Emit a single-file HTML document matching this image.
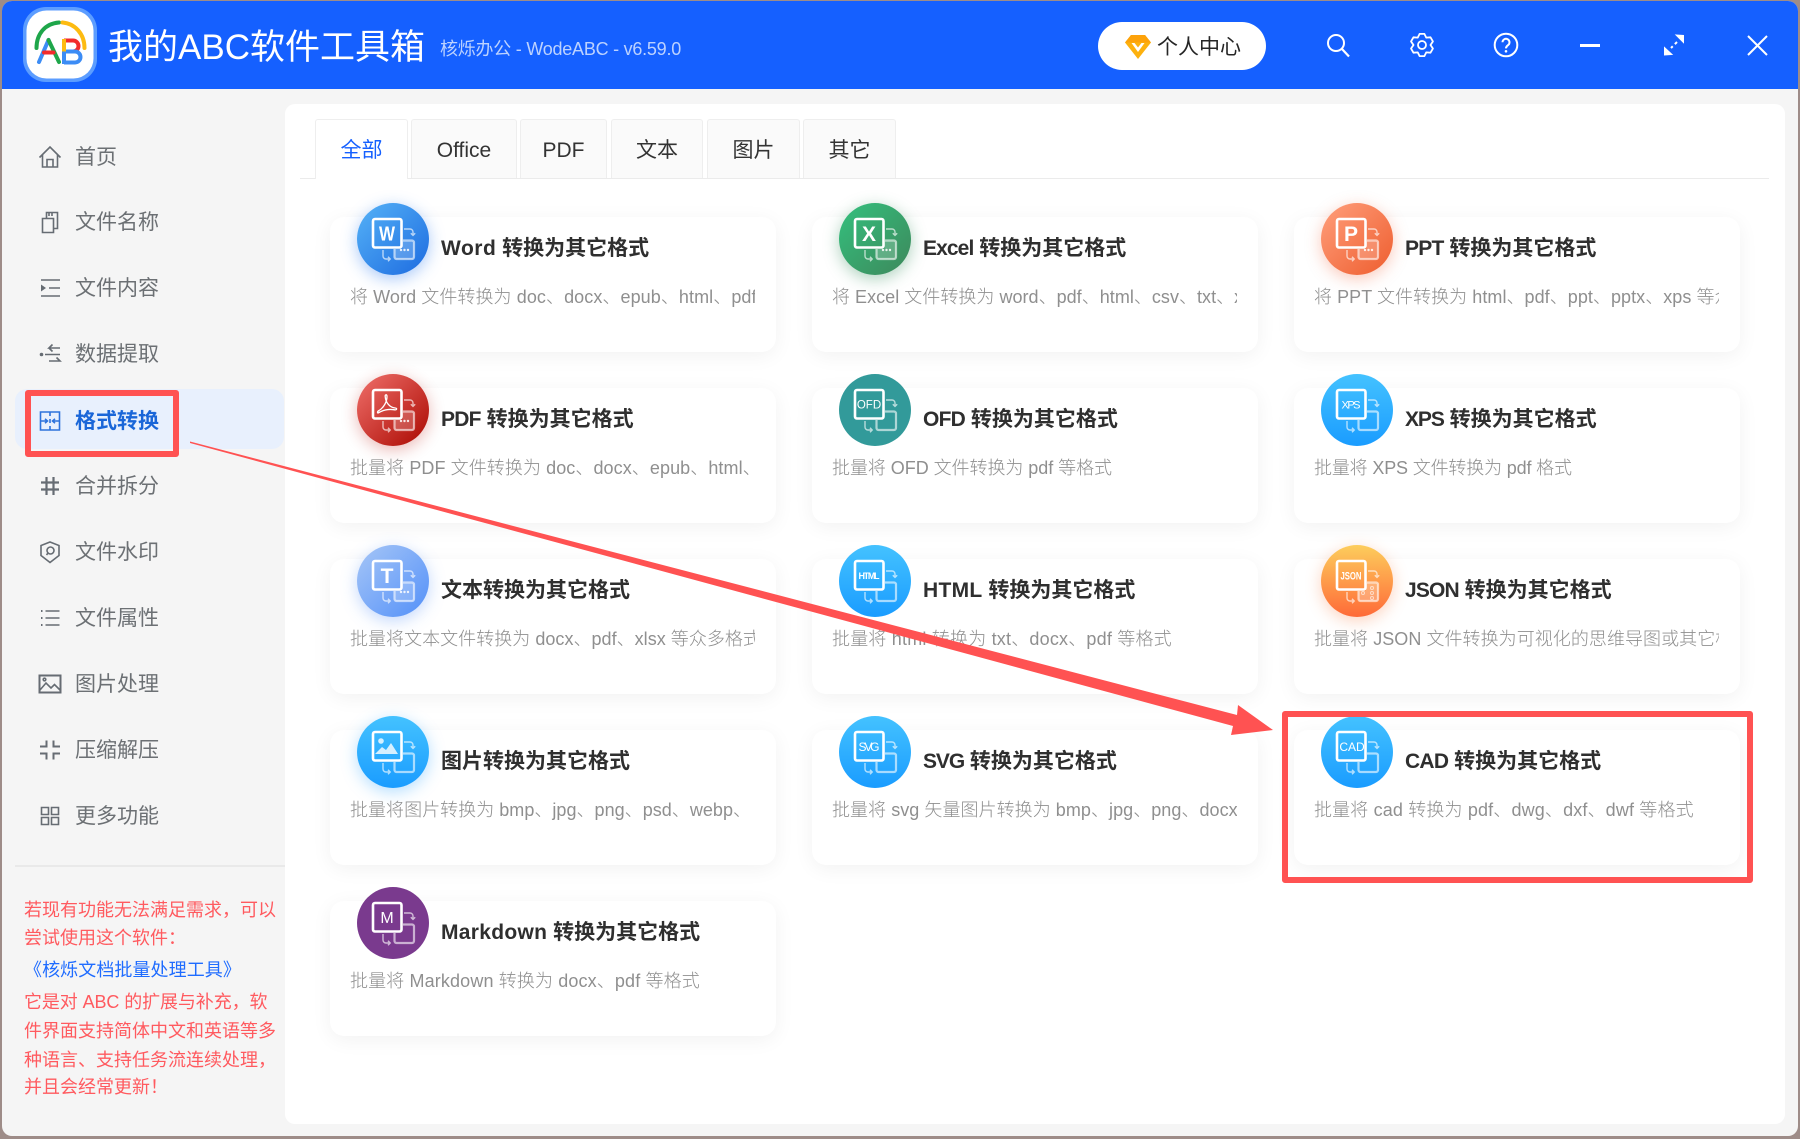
<!DOCTYPE html>
<html lang="zh-CN">
<head>
<meta charset="utf-8">
<title>我的ABC软件工具箱</title>
<style>
*{box-sizing:border-box;margin:0;padding:0}
html,body{width:1800px;height:1139px;overflow:hidden;background:#9e8c88;font-family:"Liberation Sans","Noto Sans CJK SC",sans-serif}
.win{position:absolute;left:2px;top:1px;width:1796px;height:1135px;background:#f5f5f5;border-radius:10px;overflow:hidden}
.head{position:absolute;left:2px;top:1px;width:1796px;height:88px;background:#1560ff;border-radius:10px 10px 0 0}
.abs{position:absolute}
.logo{position:absolute;left:23px;top:7px;width:74px;height:75px}
.ttl{position:absolute;left:108px;top:26px;height:44px;line-height:44px;font-size:35px;color:#fff;white-space:nowrap}
.ver{position:absolute;left:440px;top:36px;height:26px;line-height:26px;font-size:18px;letter-spacing:-.24px;color:#bcd2ff;white-space:nowrap}
.pill{position:absolute;left:1098px;top:22px;width:168px;height:48px;border-radius:24px;background:#fff}
.pilltx{position:absolute;left:1157px;top:32px;height:32px;line-height:32px;font-size:21px;color:#262626;white-space:nowrap}
.panel{position:absolute;left:285px;top:104px;width:1500px;height:1020px;background:#fff;border-radius:10px}
.tabline{position:absolute;left:300px;top:178px;width:1469px;height:1px;background:#ebebeb}
.tab{position:absolute;top:119px;height:59px;line-height:62px;text-align:center;font-size:21px;color:#333;background:#fafafa;border:1px solid #eeeeee;border-bottom:none;border-radius:3px 3px 0 0}
.tab.on{background:#fff;color:#1560ff;height:60px}
.nav{position:absolute;left:75px;height:30px;line-height:30px;font-size:21px;color:#6c7074;white-space:nowrap}
.nav.on{color:#1a66d8;font-weight:700}
.ni{position:absolute;left:38px;width:24px;height:24px;fill:none;stroke:#666c73;stroke-width:1.6}
.act{position:absolute;left:15px;top:389px;width:269px;height:60px;background:#e8f0fd;border-radius:12px}
.divd{position:absolute;left:15px;top:865px;width:270px;height:2px;background:#e9e9e9}
.note{position:absolute;left:24px;height:28px;line-height:28px;font-size:18px;color:#ff5a5f;white-space:nowrap}
.card{position:absolute;width:446px;height:135px;background:#fff;border-radius:14px;box-shadow:0 4px 20px rgba(0,0,0,.055)}
.t{position:absolute;left:111px;top:17px;height:30px;line-height:30px;font-size:21px;font-weight:700;color:#2f2f2f;white-space:nowrap}
.d{position:absolute;left:20px;top:65px;width:405px;height:30px;line-height:30px;font-size:18px;font-weight:300;letter-spacing:.08px;color:#8f8f8f;white-space:nowrap;overflow:hidden}
.ic{position:absolute;left:27px;top:-14px;width:72px;height:72px;border-radius:50%}
.ic svg{position:absolute;left:0;top:0;width:72px;height:72px}
.lb{font-family:"Liberation Sans",sans-serif;fill:#fff;text-anchor:middle}
.box{position:absolute;border:6px solid #ff5252;border-radius:3px}
</style>
</head>
<body>
<svg width="0" height="0" style="position:absolute">
  <defs>
    <g id="b">
      <path d="M46 37.5H55a2 2 0 0 1 2 2V54a2 2 0 0 1-2 2H39.5a2 2 0 0 1-2-2V46" fill="none" stroke="#fff" stroke-opacity=".6" stroke-width="2.2"/>
      <path d="M47 26h6a3 3 0 0 1 3 3v3M53.8 30.2l2.2 2.2 2.2-2.2M26 47v6a3 3 0 0 0 3 3h4M31 53.8l2.2 2.2-2.2 2.2" fill="none" stroke="#fff" stroke-opacity=".65" stroke-width="1.4"/>
      <rect x="16" y="16" width="28.5" height="28.5" rx="2" fill="none" stroke="#fff" stroke-width="2.6"/>
    </g>
    <g id="o">
      <path d="M45.5 38H55a2 2 0 0 1 2 2V54a2 2 0 0 1-2 2H39.5a2 2 0 0 1-2-2V46H45.500z" fill="#fff" fill-opacity=".2"/>
      <circle cx="44" cy="47" r="1.2" fill="#fff" fill-opacity=".85"/><circle cx="47.500" cy="47" r="1.2" fill="#fff" fill-opacity=".85"/><circle cx="51" cy="47" r="1.2" fill="#fff" fill-opacity=".85"/>
    </g>
  </defs>
</svg>

<div class="win"></div>
<div class="head"></div>

<!-- logo -->
<svg class="logo" viewBox="0 0 74 75">
  <rect x="0" y="0" width="74" height="75" rx="23" fill="#5c9dff"/>
  <rect x="3.500" y="3.500" width="67" height="68" rx="20" fill="#fff"/>
  <path d="M13.500 41C13.500 27 22 16.500 36 15.500" fill="none" stroke="#1ea64a" stroke-width="4" stroke-linecap="round"/>
  <path d="M39.500 15.500C52 16.500 61.500 27 61.500 41" fill="none" stroke="#fdbb11" stroke-width="4" stroke-linecap="round"/>
  <path d="M16 55L25.500 33" fill="none" stroke="#3c8cf5" stroke-width="4" stroke-linecap="round"/>
  <path d="M25.500 33L36 55" fill="none" stroke="#1ea64a" stroke-width="4" stroke-linecap="round"/>
  <path d="M21 45.500H30.500" fill="none" stroke="#f22b2b" stroke-width="4" stroke-linecap="round"/>
  <path d="M41 33.500H50a5.500 5.500 0 0 1 0 11H41" fill="none" stroke="#f22b2b" stroke-width="4"/>
  <path d="M41 44.500H52a5.500 5.500 0 0 1 0 11H41" fill="none" stroke="#3c8cf5" stroke-width="4"/>
  <path d="M41 32V44.500" fill="none" stroke="#fdbb11" stroke-width="4"/>
  <path d="M41 44.500V57" fill="none" stroke="#3c8cf5" stroke-width="4"/>
</svg>
<div class="ttl">我的ABC软件工具箱</div>
<div class="ver">核烁办公 - WodeABC - v6.59.0</div>

<div class="pill"></div>
<svg class="abs" style="left:1124px;top:34px" width="28" height="26" viewBox="0 0 28 26">
  <path d="M7 1H21L27 8.500L14 25L1 8.500Z" fill="#fdb10e"/>
  <path d="M7.500 9H20.500L14 18Z" fill="#fff"/>
  <path d="M10.500 9H17.500L14 13.500Z" fill="#fdb10e"/>
  <path d="M7 1H21L27 8.500H1Z" fill="#fda20a"/>
</svg>
<div class="pilltx">个人中心</div>

<!-- header tools -->
<svg class="abs" style="left:1325px;top:32px" width="26" height="26" viewBox="0 0 26 26" fill="none" stroke="#fff" stroke-width="2">
  <circle cx="11" cy="11" r="8"/><path d="M17 17L24 24.500" stroke-width="2.200"/>
</svg>
<svg class="abs" style="left:1410px;top:33px" width="24" height="24" viewBox="0 0 24 24" fill="none" stroke="#fff" stroke-width="1.800" stroke-linejoin="round">
  <path d="M9.600.9L14.400.9L16.250 4.640L20.500 4.300L22.900 8.450L20.500 12L22.900 15.550L20.500 19.700L16.250 19.360L14.400 23.100L9.600 23.100L7.750 19.360L3.450 19.700L1.060 15.550L3.500 12L1.060 8.450L3.450 4.300L7.750 4.640Z"/>
  <circle cx="12" cy="12" r="4"/>
</svg>
<svg class="abs" style="left:1493px;top:32px" width="26" height="26" viewBox="0 0 26 26" fill="none" stroke="#fff" stroke-width="2">
  <circle cx="13" cy="13" r="11.300"/>
  <path d="M9.500 10.300a3.500 3.500 0 1 1 5.500 2.900c-1.300.9-2 1.600-2 3.200"/>
  <circle cx="13" cy="19.300" r=".8" fill="#fff" stroke-width="1"/>
</svg>
<div class="abs" style="left:1580px;top:44px;width:20px;height:2.500px;background:#fff"></div>
<svg class="abs" style="left:1662px;top:33px" width="24" height="24" viewBox="0 0 24 24" fill="#fff" stroke="#fff">
  <path d="M15 9L9 15" stroke-width="2" stroke-dasharray="3 3"/>
  <path d="M14 2L21.500 2.500L21.500 9.500Z" stroke-width="1"/>
  <path d="M2.500 14.500L2.500 22L10 21.500Z" stroke-width="1"/>
</svg>
<svg class="abs" style="left:1747px;top:35px" width="21" height="21" viewBox="0 0 21 21" fill="none" stroke="#fff" stroke-width="2">
  <path d="M1 1L20 20M20 1L1 20"/>
</svg>

<!-- sidebar -->
<div class="act"></div>

<svg class="ni" style="top:145px" viewBox="0 0 24 24"><path d="M1.500 12.500L12 2L22.500 12.500M4.500 10V22H19.500V10M9 22V14.500H15V22"/></svg>
<div class="nav" style="top:143px">首页</div>
<svg class="ni" style="top:210px" viewBox="0 0 24 24"><path d="M4.500 8.500H15.500V22.500H4.500ZM8.500 8V2.500H19.500V18.500H16M11 2.500V6M14 2.500V6"/></svg>
<div class="nav" style="top:208px">文件名称</div>
<svg class="ni" style="top:276px" viewBox="0 0 24 24"><path d="M3 4H22M11 12H22M3 20H22"/><path d="M3 8.500L8 12L3 15.500Z" fill="#666c73" stroke="none"/></svg>
<div class="nav" style="top:274px">文件内容</div>
<svg class="ni" style="top:342px" viewBox="0 0 24 24"><circle cx="3.500" cy="12.500" r="1.800" fill="#666c73" stroke="none"/><path d="M7 12.500H22M22 6H11L14.500 2.500M11 19H22L18.500 15.500M11 6L14.500 9.500"/></svg>
<div class="nav" style="top:340px">数据提取</div>
<svg class="ni" style="top:409px;stroke:#2d72dc" viewBox="0 0 24 24"><path d="M2.500 3H21.500V21H2.500ZM12 3V7M12 10V14M12 17V21M3 12H9M7 9.800L9.500 12L7 14.200M21 12H15M17 9.800L14.500 12L17 14.200"/></svg>
<div class="nav on" style="top:407px">格式转换</div>
<svg class="ni" style="top:474px" viewBox="0 0 24 24"><path d="M3 8.500H21M3 15.500H21M8.500 3V21M15.500 3V21" stroke-width="2.200"/></svg>
<div class="nav" style="top:472px">合并拆分</div>
<svg class="ni" style="top:540px" viewBox="0 0 24 24"><path d="M12 2L21 5.500V15.500L12 22.500L3 15.500V5.500Z"/><circle cx="12.500" cy="10.500" r="3.500"/><path d="M10 13L8.500 15"/></svg>
<div class="nav" style="top:538px">文件水印</div>
<svg class="ni" style="top:606px" viewBox="0 0 24 24"><path d="M7.500 5H21.500M7.500 12H21.500M7.500 19H21.500"/><path d="M3 5h1.500M3 12h1.500M3 19h1.500" stroke-width="2"/></svg>
<div class="nav" style="top:604px">文件属性</div>
<svg class="ni" style="top:672px" viewBox="0 0 24 24"><path d="M1.500 3.500H22.500V20.500H1.500Z" stroke-width="2"/><path d="M2 18L8 11L13 16L16.500 12.500L22 18"/><circle cx="6.500" cy="7.500" r="1.300"/></svg>
<div class="nav" style="top:670px">图片处理</div>
<svg class="ni" style="top:738px" viewBox="0 0 24 24"><path d="M2 8.500H8.500V2.500M15.500 2.500V8.500H22M2 15.500H8.500V21.500M22 15.500H15.500V21.500" stroke-width="2"/></svg>
<div class="nav" style="top:736px">压缩解压</div>
<svg class="ni" style="top:804px" viewBox="0 0 24 24"><path d="M3.500 3.500H10.500V10.500H3.500ZM13.500 3.500H20.500V10.500H13.500ZM3.500 13.500H10.500V20.500H3.500ZM13.500 13.500H20.500V20.500H13.500Z"/></svg>
<div class="nav" style="top:802px">更多功能</div>

<div class="divd"></div>
<div class="note" style="top:896px">若现有功能无法满足需求，可以</div>
<div class="note" style="top:924px">尝试使用这个软件：</div>
<div class="note" style="top:956px;left:24px;color:#1f6cff;letter-spacing:.08px">《核烁文档批量处理工具》</div>
<div class="note" style="top:988px;letter-spacing:-.1px">它是对 ABC 的扩展与补充，软</div>
<div class="note" style="top:1017px">件界面支持简体中文和英语等多</div>
<div class="note" style="top:1046px">种语言、支持任务流连续处理，</div>
<div class="note" style="top:1073px">并且会经常更新！</div>

<!-- main panel -->
<div class="panel"></div>
<div class="tabline"></div>
<div class="tab on" style="left:315px;width:93px">全部</div>
<div class="tab" style="left:411px;width:106px">Office</div>
<div class="tab" style="left:520px;width:87px">PDF</div>
<div class="tab" style="left:611px;width:92px">文本</div>
<div class="tab" style="left:707px;width:93px">图片</div>
<div class="tab" style="left:803px;width:93px">其它</div>

<!-- row 1 -->
<div class="card" style="left:330px;top:217px">
  <div class="ic" style="background:linear-gradient(135deg,#55b2f7,#1d6be0);box-shadow:0 4px 16px rgba(40,120,240,.4)"><svg viewBox="0 0 72 72"><use href="#o"/><use href="#b"/><text class="lb" x="30" y="37.500" font-size="20" font-weight="700" textLength="16" lengthAdjust="spacingAndGlyphs">W</text></svg></div>
  <div class="t"><span style="letter-spacing:.5px">Word</span> 转换为其它格式</div>
  <div class="d">将 Word 文件转换为 doc、docx、epub、html、pdf、ppt、pptx 等</div>
</div>
<div class="card" style="left:812px;top:217px">
  <div class="ic" style="background:linear-gradient(135deg,#34c07e,#3d885b);box-shadow:0 4px 16px rgba(50,140,90,.4)"><svg viewBox="0 0 72 72"><use href="#o"/><use href="#b"/><text class="lb" x="30" y="38" font-size="21" font-weight="700">X</text></svg></div>
  <div class="t"><span style="letter-spacing:-.9px">Excel</span> 转换为其它格式</div>
  <div class="d" style="letter-spacing:.03px">将 Excel 文件转换为 word、pdf、html、csv、txt、xml 等格式</div>
</div>
<div class="card" style="left:1294px;top:217px">
  <div class="ic" style="background:linear-gradient(135deg,#ff9f7c,#ee5d2e);box-shadow:0 4px 16px rgba(240,100,60,.35)"><svg viewBox="0 0 72 72"><use href="#o"/><use href="#b"/><text class="lb" x="30" y="38" font-size="21" font-weight="700">P</text></svg></div>
  <div class="t"><span style="letter-spacing:-.75px">PPT</span> 转换为其它格式</div>
  <div class="d" style="letter-spacing:.05px">将 PPT 文件转换为 html、pdf、ppt、pptx、xps 等众多格式</div>
</div>

<!-- row 2 -->
<div class="card" style="left:330px;top:388px">
  <div class="ic" style="background:linear-gradient(135deg,#f0706b,#aa0800);box-shadow:0 4px 16px rgba(190,40,30,.33)"><svg viewBox="0 0 72 72"><use href="#o"/><use href="#b"/><path d="M22 38.500c-2 1.500-2-1 0-2 5-3 8-9 8-14 0-2.500-2-2-1.800 0 .4 6 4.500 11 10 11.500 2.200.2 1.800 2.200-.5 1.800-6-1-11 0-15.700 2.700z" fill="none" stroke="#fff" stroke-width="1.300"/></svg></div>
  <div class="t"><span style="letter-spacing:-.75px">PDF</span> 转换为其它格式</div>
  <div class="d">批量将 PDF 文件转换为 doc、docx、epub、html、</div>
</div>
<div class="card" style="left:812px;top:388px">
  <div class="ic" style="background:#329a9a"><svg viewBox="0 0 72 72"><use href="#b"/><text class="lb" x="30" y="34.500" font-size="11.500">OFD</text></svg></div>
  <div class="t"><span style="letter-spacing:-.75px">OFD</span> 转换为其它格式</div>
  <div class="d" style="letter-spacing:-.05px">批量将 OFD 文件转换为 pdf 等格式</div>
</div>
<div class="card" style="left:1294px;top:388px">
  <div class="ic" style="background:linear-gradient(180deg,#44c2ff,#1a9cff)"><svg viewBox="0 0 72 72"><use href="#b"/><text class="lb" x="30" y="34.500" font-size="11" textLength="19">XPS</text></svg></div>
  <div class="t"><span style="letter-spacing:-1.1px">XPS</span> 转换为其它格式</div>
  <div class="d" style="letter-spacing:-.16px">批量将 XPS 文件转换为 pdf 格式</div>
</div>

<!-- row 3 -->
<div class="card" style="left:330px;top:559px">
  <div class="ic" style="background:linear-gradient(135deg,#a6c6f7,#5390f8);box-shadow:0 4px 16px rgba(80,140,245,.35)"><svg viewBox="0 0 72 72"><use href="#o"/><use href="#b"/><text class="lb" x="30" y="38" font-size="21" font-weight="700">T</text></svg></div>
  <div class="t">文本转换为其它格式</div>
  <div class="d" style="letter-spacing:.03px">批量将文本文件转换为 docx、pdf、xlsx 等众多格式</div>
</div>
<div class="card" style="left:812px;top:559px">
  <div class="ic" style="background:linear-gradient(180deg,#44c2ff,#1a9cff)"><svg viewBox="0 0 72 72"><use href="#b"/><text class="lb" x="30" y="34" font-size="9" font-weight="700" textLength="21">HTML</text></svg></div>
  <div class="t"><span style="letter-spacing:.3px">HTML</span> 转换为其它格式</div>
  <div class="d" style="letter-spacing:.2px">批量将 html 转换为 txt、docx、pdf 等格式</div>
</div>
<div class="card" style="left:1294px;top:559px">
  <div class="ic" style="background:linear-gradient(180deg,#fdcd5c,#fe6a38);box-shadow:0 4px 16px rgba(250,120,60,.33)"><svg viewBox="0 0 72 72"><use href="#b"/><path d="M45 38H55a2 2 0 0 1 2 2V54a2 2 0 0 1-2 2H39.500a2 2 0 0 1-2-2V46H45z" fill="#fff" fill-opacity=".25"/><circle cx="42" cy="48" r="1.500" fill="none" stroke="#fff" stroke-opacity=".6"/><circle cx="51" cy="43" r="1.500" fill="none" stroke="#fff" stroke-opacity=".6"/><circle cx="51" cy="48" r="1.500" fill="none" stroke="#fff" stroke-opacity=".6"/><circle cx="51" cy="53" r="1.500" fill="none" stroke="#fff" stroke-opacity=".6"/><text class="lb" x="30" y="34.500" font-size="11" font-weight="700" textLength="21" lengthAdjust="spacingAndGlyphs">JSON</text></svg></div>
  <div class="t"><span style="letter-spacing:-.85px">JSON</span> 转换为其它格式</div>
  <div class="d" style="letter-spacing:.05px">批量将 JSON 文件转换为可视化的思维导图或其它格式的文件</div>
</div>

<!-- row 4 -->
<div class="card" style="left:330px;top:730px">
  <div class="ic" style="background:linear-gradient(180deg,#44c2ff,#1a9cff);box-shadow:0 4px 16px rgba(40,160,255,.35)"><svg viewBox="0 0 72 72"><use href="#b"/><circle cx="24" cy="25" r="2.800" fill="#fff" fill-opacity=".8"/><path d="M18 38L25 31L29 34L34 27L41 38Z" fill="#fff" fill-opacity=".8"/></svg></div>
  <div class="t">图片转换为其它格式</div>
  <div class="d" style="letter-spacing:.03px">批量将图片转换为 bmp、jpg、png、psd、webp、</div>
</div>
<div class="card" style="left:812px;top:730px">
  <div class="ic" style="background:linear-gradient(180deg,#44c2ff,#1a9cff)"><svg viewBox="0 0 72 72"><use href="#b"/><text class="lb" x="30" y="35" font-size="12" textLength="21">SVG</text></svg></div>
  <div class="t"><span style="letter-spacing:-1.1px">SVG</span> 转换为其它格式</div>
  <div class="d" style="letter-spacing:.05px">批量将 svg 矢量图片转换为 bmp、jpg、png、docx、</div>
</div>
<div class="card" style="left:1294px;top:730px">
  <div class="ic" style="background:linear-gradient(180deg,#44c2ff,#1a9cff)"><svg viewBox="0 0 72 72"><use href="#b"/><text class="lb" x="31" y="35" font-size="12">CAD</text></svg></div>
  <div class="t"><span style="letter-spacing:-.75px">CAD</span> 转换为其它格式</div>
  <div class="d" style="letter-spacing:.15px">批量将 cad 转换为 pdf、dwg、dxf、dwf 等格式</div>
</div>

<!-- row 5 -->
<div class="card" style="left:330px;top:901px">
  <div class="ic" style="background:#7a3a8e"><svg viewBox="0 0 72 72"><use href="#b"/><text class="lb" x="30" y="36" font-size="16">M</text></svg></div>
  <div class="t"><span style="letter-spacing:.3px">Markdown</span> 转换为其它格式</div>
  <div class="d" style="letter-spacing:.13px">批量将 Markdown 转换为 docx、pdf 等格式</div>
</div>

<!-- annotations -->
<div class="box" style="left:25px;top:390px;width:154px;height:67px"></div>
<div class="box" style="left:1282px;top:711px;width:471px;height:172px"></div>
<svg class="abs" style="left:0;top:0" width="1800" height="1139" viewBox="0 0 1800 1139">
  <path d="M190 441.500L1237 715L1238 705L1273 730L1231 735L1233 726L190 443Z" fill="#ff5252"/>
</svg>
</body>
</html>
